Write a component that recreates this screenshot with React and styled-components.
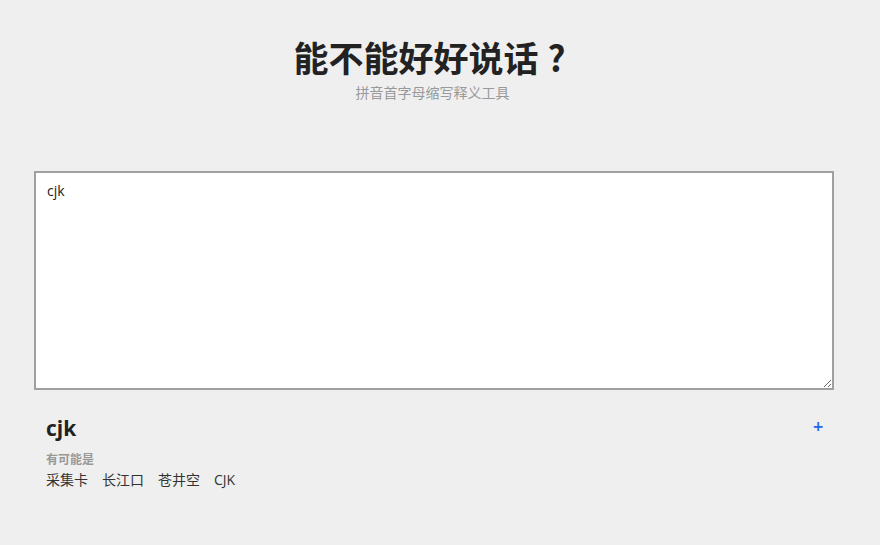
import React, { useState } from "react";
import styled, { createGlobalStyle } from "styled-components";

const GlobalStyle = createGlobalStyle`
  html, body {
    margin: 0;
    padding: 0;
    background: #efefef;
    font-family: "Open Sans", "Noto Sans CJK SC", sans-serif;
    color: #222;
  }
`;

const Page = styled.div`
  width: 800px;
  margin-left: 34px;
  padding-top: 34px;
`;

const Header = styled.header`
  text-align: center;
  margin-bottom: 69px;
`;

const Title = styled.h1`
  margin: 0;
  padding-right: 9px;
  font-family: "Noto Sans CJK SC", sans-serif;
  font-size: 35px;
  line-height: 46px;
  font-weight: 700;
  color: #222;
`;

const Mark = styled.span`
  margin-left: 9px;
`;

const Subtitle = styled.p`
  margin: 4px 0 0;
  padding-right: 3px;
  font-size: 14px;
  line-height: 18px;
  color: #999;
`;

const Input = styled.textarea`
  display: block;
  box-sizing: border-box;
  width: 800px;
  height: 219px;
  padding: 8px 11px;
  border: 2px solid #a0a0a0;
  background: #fff;
  font-family: "Open Sans", "Noto Sans CJK SC", sans-serif;
  font-size: 14px;
  line-height: 20px;
  color: #222;
  outline: none;
  resize: vertical;
`;

const Result = styled.section`
  position: relative;
  padding: 24px 12px 0;
`;

const Word = styled.h2`
  margin: 0;
  font-size: 21px;
  line-height: 28px;
  font-weight: 700;
  color: #222;
`;

const Add = styled.button`
  position: absolute;
  top: 28px;
  right: 10px;
  border: 0;
  background: none;
  padding: 0;
  color: #2563eb;
  font-size: 14px;
  font-weight: 700;
  cursor: pointer;
  font-family: "DejaVu Sans", sans-serif;
`;

const Label = styled.div`
  margin-top: 10px;
  font-size: 12px;
  line-height: 16px;
  font-weight: 700;
  color: #999;
`;

const Candidates = styled.div`
  display: flex;
  gap: 14px;
  margin-top: 2px;
  font-size: 14px;
  line-height: 20px;
  color: #333;
`;

export default function App() {
  const [text, setText] = useState("cjk");
  const items = ["采集卡", "长江口", "苍井空", "CJK"];
  return (
    <>
      <GlobalStyle />
      <Page>
        <Header>
          <Title>
            能不能好好说话<Mark>?</Mark>
          </Title>
          <Subtitle>拼音首字母缩写释义工具</Subtitle>
        </Header>
        <Input autoFocus value={text} onChange={(e) => setText(e.target.value)} />
        <Result>
          <Word>cjk</Word>
          <Add>+</Add>
          <Label>有可能是</Label>
          <Candidates>
            {items.map((i) => (
              <span key={i}>{i}</span>
            ))}
          </Candidates>
        </Result>
      </Page>
    </>
  );
}
